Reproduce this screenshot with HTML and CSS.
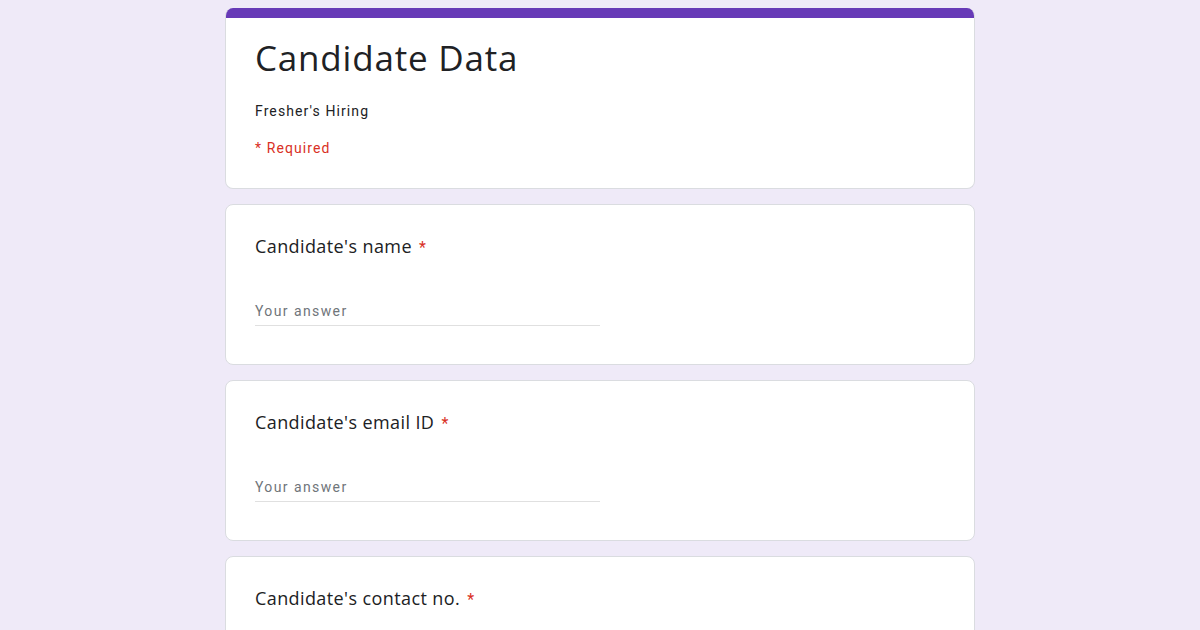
FILE: index.html
```html
<!DOCTYPE html>
<html lang="en">
<head>
<meta charset="utf-8">
<title>Candidate Data</title>
<link rel="stylesheet" href="styles.css">
</head>
<body>
<main class="form">
  <section class="card header-card">
    <div class="accent"></div>
    <div class="header-body">
      <h1 class="title">Candidate Data</h1>
      <p class="desc">Fresher's Hiring</p>
      <p class="required-note">* Required</p>
    </div>
  </section>
  <section class="card question">
    <div class="q-label">Candidate's name <span class="star">*</span></div>
    <div class="answer"><span class="placeholder">Your answer</span></div>
  </section>
  <section class="card question">
    <div class="q-label">Candidate's email ID <span class="star">*</span></div>
    <div class="answer"><span class="placeholder">Your answer</span></div>
  </section>
  <section class="card question">
    <div class="q-label">Candidate's contact no. <span class="star">*</span></div>
    <div class="answer"><span class="placeholder">Your answer</span></div>
  </section>
</main>
</body>
</html>
```

FILE: styles.css
```css
html, body {
  margin: 0;
  padding: 0;
  background: #efeaf8;
  overflow: hidden;
}
body {
  font-family: Roboto, "Liberation Sans", sans-serif;
  color: #202124;
}
.form {
  width: 750px;
  height: 622px;
  margin: 8px auto 0;
  display: flex;
  flex-direction: column;
  gap: 15px;
  overflow: hidden;
}
.card {
  flex: none;
  background: #fff;
  border: 1px solid #dadce0;
  border-radius: 8px;
  box-sizing: border-box;
}
.header-card {
  overflow: hidden;
  border-top: none;
  height: 181px;
}
.accent {
  height: 10px;
  background: #673ab7;
}
.header-body {
  padding: 20px 29px 0;
}
.title {
  margin: 0;
  font-family: "Open Sans", sans-serif;
  font-weight: 400;
  font-size: 35px;
  line-height: 40px;
  letter-spacing: 0.8px;
  color: #202124;
}
.desc {
  margin: 23px 0 0;
  font-size: 14px;
  line-height: 20px;
  letter-spacing: 1.1px;
}
.required-note {
  margin: 17px 0 0;
  font-size: 14px;
  line-height: 20px;
  letter-spacing: 1.1px;
  color: #d93025;
}
.question {
  height: 161px;
  padding: 29px 29px 0;
}
.q-label {
  height: 24px;
  font-family: "Open Sans", sans-serif;
  font-size: 18px;
  line-height: 24px;
  letter-spacing: 0.4px;
  color: #202124;
}
.star {
  font-family: Roboto, sans-serif;
  font-size: 16px;
  line-height: 1;
  margin-left: 2px;
  color: #d93025;
}
.answer {
  margin-top: 39px;
  width: 345px;
  height: 29px;
  border-bottom: 1px solid #e0e0e0;
  box-sizing: border-box;
  display: flex;
  align-items: center;
}
.placeholder {
  font-size: 14px;
  letter-spacing: 1.4px;
  color: #70757a;
}
```
